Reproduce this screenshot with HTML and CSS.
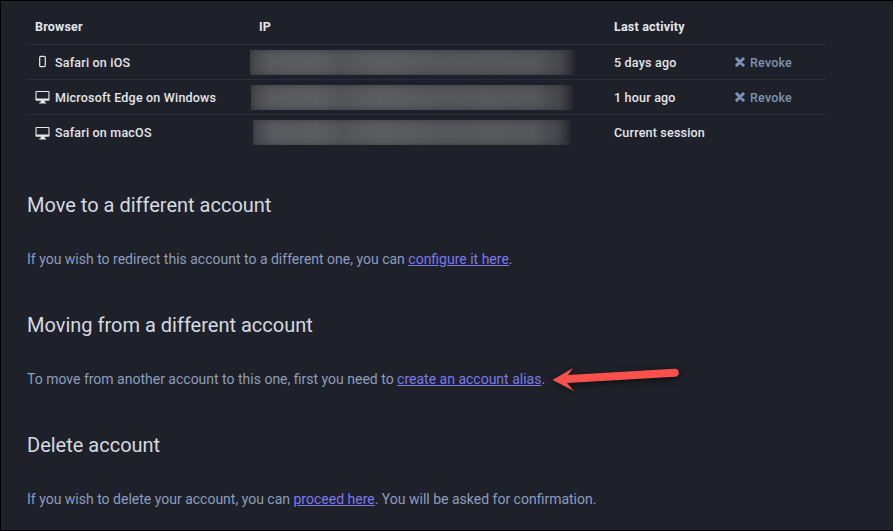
FILE: index.html
```html
<!DOCTYPE html>
<html lang="en">
<head>
    <meta charset="UTF-8">
    <title>Account settings</title>
    <link rel="stylesheet" href="styles.css">
</head>
<body>
    <div class="window">
        <div class="sessions">
            <div class="row head">
                <div>Browser</div>
                <div class="ip-title">IP</div>
                <div>Last activity</div>
                <div></div>
            </div>
            <div class="row">
                <div class="browser">
                    <svg class="device" viewBox="0 0 16 14"><rect x="5" y="1" width="6" height="11" rx="1.2" fill="none" stroke="#e4e6ea" stroke-width="1.3"/></svg>
                    Safari on iOS
                </div>
                <div><div class="redacted first"></div></div>
                <div>5 days ago</div>
                <a class="revoke" href="#">
                    <svg class="cross" viewBox="0 0 10 10"><path d="M1.8 1.8 8.2 8.2M8.2 1.8 1.8 8.2" stroke="#7f92b3" stroke-width="3" stroke-linecap="round"/></svg>
                    Revoke
                </a>
            </div>
            <div class="row">
                <div class="browser">
                    <svg class="device" viewBox="0 0 16 14"><path d="M1.5 0.5h13a1 1 0 0 1 1 1v8.5a1 1 0 0 1-1 1h-4.3l.5 1.8h1.3v1H4.500v-1h1.300l.5-1.800H1.500a1 1 0 0 1-1-1V1.500a1 1 0 0 1 1-1zM1.700 1.700v7h12.600v-7z" fill="#e4e6ea" fill-rule="evenodd"/></svg>
                    Microsoft Edge on Windows
                </div>
                <div><div class="redacted second"></div></div>
                <div>1 hour ago</div>
                <a class="revoke" href="#">
                    <svg class="cross" viewBox="0 0 10 10"><path d="M1.8 1.8 8.2 8.2M8.2 1.8 1.8 8.2" stroke="#7f92b3" stroke-width="3" stroke-linecap="round"/></svg>
                    Revoke
                </a>
            </div>
            <div class="row">
                <div class="browser">
                    <svg class="device" viewBox="0 0 16 14"><path d="M1.5 0.5h13a1 1 0 0 1 1 1v8.5a1 1 0 0 1-1 1h-4.3l.5 1.8h1.3v1H4.500v-1h1.300l.5-1.800H1.500a1 1 0 0 1-1-1V1.500a1 1 0 0 1 1-1zM1.700 1.700v7h12.600v-7z" fill="#e4e6ea" fill-rule="evenodd"/></svg>
                    Safari on macOS
                </div>
                <div><div class="redacted third"></div></div>
                <div>Current session</div>
                <div></div>
            </div>
        </div>

        <h2 class="first-title">Move to a different account</h2>
        <p>If you wish to redirect this account to a different one, you can <a href="#">configure it here</a>.</p>

        <h2>Moving from a different account</h2>
        <p>To move from another account to this one, first you need to <a href="#">create an account alias</a>.</p>

        <h2>Delete account</h2>
        <p>If you wish to delete your account, you can <a href="#">proceed here</a>. You will be asked for confirmation.</p>

        <svg class="arrow" viewBox="0 0 140 36"><path d="M5.500 18 26 6 21 13 127.500 6.800a4 4 0 0 1 .5 8L20 21 27 29z" fill="#f9504c"/></svg>
    </div>
</body>
</html>
```

FILE: styles.css
```css
* {
    box-sizing: border-box;
}

html, body {
    margin: 0;
    height: 100%;
}

body {
    font-family: Roboto, "Noto Sans", sans-serif;
    background-color: #1e2129;
    overflow: hidden;
}

.window {
    position: relative;
    height: 531px;
    padding: 9px 66px 0 26px;
    border-top: 1px solid #000;
    border-left: 1px solid #000;
    border-bottom: 1px solid #000;
    color: #8c9dbf;
}

.sessions {
    font-size: 12.500px;
    font-weight: 500;
    letter-spacing: 0.2px;
    color: #e4e6ea;
}

.row {
    display: grid;
    grid-template-columns: 224px 355px 121px 1fr;
    align-items: center;
    height: 35px;
    padding-left: 8px;
    border-bottom: 1px solid #2a2e37;
}

.row:last-child {
    border-bottom: none;
}

.head {
    font-weight: 700;
    height: 35px;
    padding-bottom: 2px;
}

.browser {
    display: flex;
    align-items: center;
    gap: 5px;
}

.device {
    width: 15px;
    height: 14px;
    flex: none;
}

.redacted {
    height: 25px;
    background: linear-gradient(to right, #45474d 0, #58595d 6%, #5c5d60 20%, #535458 28%, #5c5d60 40%, #55565a 60%, #57585b 75%, #55565a 88%, #45464b 96%, #26282f 100%);
    box-shadow: inset 0 0 6px rgba(40, 42, 48, 0.6);
}

.redacted.first {
    width: 325px;
    margin-left: -9px;
}

.redacted.second {
    width: 322px;
    margin-left: -8px;
}

.redacted.third {
    width: 318px;
    margin-left: -6px;
}

.revoke {
    display: flex;
    align-items: center;
    gap: 5px;
    color: #7f92b3;
    text-decoration: none;
}

.cross {
    width: 10px;
    height: 10px;
}

h2 {
    margin: 42px 0 0;
    font-size: 20px;
    font-weight: 400;
    line-height: 28px;
    color: #d5d9e0;
}

.first-title {
    margin-top: 41px;
}

p {
    margin: 30px 0 0;
    font-size: 14px;
    line-height: 20px;
}

a {
    color: #7c79ee;
}

.arrow {
    position: absolute;
    left: 546px;
    top: 361px;
    width: 140px;
    height: 36px;
    filter: drop-shadow(1px 2px 3px rgba(0, 0, 0, 0.6));
}
```
